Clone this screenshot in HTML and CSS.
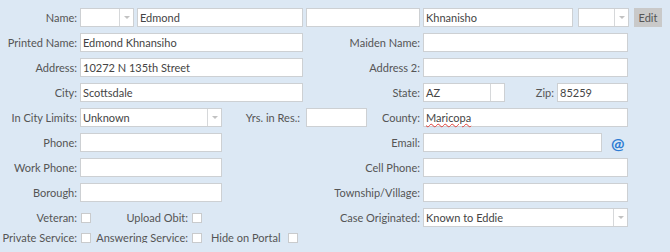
FILE: index.html
```html
<!DOCTYPE html>
<html lang="en">
<head>
  <meta charset="UTF-8">
  <meta name="viewport" content="width=device-width, initial-scale=1.0">
  <title>Decedent Info</title>
  <link rel="stylesheet" href="styles.css">
</head>
<body>
  <div class="form">
    <!-- Name -->
    <label class="lbl">Name:</label>
    <div class="cell">
      <div class="combo w-prefix"><span class="combo-text"></span><span class="combo-btn"></span></div>
      <input type="text" class="field w-first" value="Edmond">
    </div>
    <input type="text" class="field" value="">
    <div class="cell">
      <input type="text" class="field w-last" value="Khnanisho">
      <div class="combo w-suffix"><span class="combo-text"></span><span class="combo-btn"></span></div>
      <button class="btn-edit">Edit</button>
    </div>

    <!-- Printed name -->
    <label class="lbl">Printed Name:</label>
    <input type="text" class="field" value="Edmond Khnansiho">
    <label class="lbl">Maiden Name:</label>
    <input type="text" class="field w-right" value="">

    <!-- Address -->
    <label class="lbl">Address:</label>
    <input type="text" class="field" value="10272 N 135th Street">
    <label class="lbl">Address 2:</label>
    <input type="text" class="field w-right" value="">

    <!-- City / State / Zip -->
    <label class="lbl">City:</label>
    <input type="text" class="field" value="Scottsdale">
    <label class="lbl">State:</label>
    <div class="cell">
      <div class="combo w-state"><span class="combo-text">AZ</span><span class="combo-btn no-arrow"></span></div>
      <label class="lbl lbl-zip">Zip:</label>
      <input type="text" class="field w-zip" value="85259">
    </div>

    <!-- City limits / County -->
    <label class="lbl">In City Limits:</label>
    <div class="cell">
      <div class="combo w-short"><span class="combo-text">Unknown</span><span class="combo-btn"></span></div>
      <label class="lbl lbl-yrs">Yrs. in Res.:</label>
    </div>
    <div class="cell">
      <input type="text" class="field w-yrs" value="">
      <label class="lbl lbl-county">County:</label>
    </div>
    <div class="spell w-right">
      <input type="text" class="field" value="Maricopa" spellcheck="true">
      <span class="squiggle">Maricopa</span>
    </div>

    <!-- Phone / Email -->
    <label class="lbl">Phone:</label>
    <input type="text" class="field w-short" value="">
    <label class="lbl">Email:</label>
    <div class="cell">
      <input type="text" class="field w-email" value="">
      <span class="at-icon">@</span>
    </div>

    <!-- Work / Cell -->
    <label class="lbl">Work Phone:</label>
    <input type="text" class="field w-short" value="">
    <label class="lbl">Cell Phone:</label>
    <input type="text" class="field w-right" value="">

    <!-- Borough / Township -->
    <label class="lbl">Borough:</label>
    <input type="text" class="field w-short" value="">
    <label class="lbl">Township/Village:</label>
    <input type="text" class="field w-right" value="">

    <!-- Veteran / Case originated -->
    <label class="lbl">Veteran:</label>
    <div class="checks">
      <input type="checkbox" class="chk">
      <label class="lbl lbl-mid">Upload Obit:</label>
      <input type="checkbox" class="chk chk-mid">
    </div>
    <label class="lbl">Case Originated:</label>
    <div class="combo w-right"><span class="combo-text">Known to Eddie</span><span class="combo-btn"></span></div>

    <!-- Service flags -->
    <label class="lbl">Private Service:</label>
    <div class="checks">
      <input type="checkbox" class="chk">
      <label class="lbl lbl-mid">Answering Service:</label>
      <input type="checkbox" class="chk chk-mid">
      <label class="lbl lbl-portal">Hide on Portal</label>
      <input type="checkbox" class="chk chk-portal">
    </div>
  </div>
</body>
</html>
```

FILE: styles.css
```css
body {
  margin: 0;
  background-color: #dce8f4;
  font-family: Lato, "Open Sans", sans-serif;
  font-size: 11px;
  color: #555;
  overflow: hidden;
}

.form {
  display: grid;
  grid-template-columns: 77px 223px 114px 1fr;
  grid-template-rows: repeat(9, 19px) 10px;
  column-gap: 3px;
  row-gap: 6px;
  align-items: center;
  padding-top: 8px;
}

.lbl {
  text-align: right;
  white-space: nowrap;
  line-height: 12px;
}

.cell {
  display: flex;
  align-items: center;
}

/* Text inputs */
.field {
  box-sizing: border-box;
  width: 100%;
  height: 19px;
  margin: 0;
  padding: 0 2px;
  border: 1px solid #cdd0d3;
  background-color: #fff;
  font-family: inherit;
  font-size: 11px;
  color: #444;
  outline: none;
  flex: none;
}

.w-short { width: 142px; }
.w-right { width: 205px; }
.w-first { width: 166px; margin-left: 3px; }
.w-last { width: 150px; }
.w-email { width: 179px; }
.w-zip { width: 71px; }
.w-yrs { width: 61px; }

/* Spell-check squiggle drawn over the County value */
.spell {
  position: relative;
  height: 19px;
}

.squiggle {
  position: absolute;
  left: 3px;
  top: 1px;
  line-height: 17px;
  font-size: 11px;
  color: transparent;
  text-decoration: underline wavy #e0413a;
  text-decoration-thickness: 1px;
  text-underline-offset: 1px;
  pointer-events: none;
}

/* Drop-down look */
.combo {
  box-sizing: border-box;
  height: 19px;
  display: flex;
  flex: none;
  border: 1px solid #cdd0d3;
  background-color: #fff;
  color: #444;
}

.combo-text {
  flex: 1;
  padding: 0 2px;
  line-height: 17px;
  white-space: nowrap;
  overflow: hidden;
}

.combo-btn {
  width: 13px;
  border-left: 1px solid #d6d8da;
  display: flex;
  align-items: center;
  justify-content: center;
}

.combo-btn::after {
  content: "";
  border-left: 3px solid transparent;
  border-right: 3px solid transparent;
  border-top: 3px solid #c2c2c2;
}

.combo-btn.no-arrow::after {
  display: none;
}

.w-prefix { width: 54px; }
.w-suffix { width: 51px; margin-left: 5px; }
.w-state { width: 82px; }

.lbl-zip {
  width: 49px;
  margin-right: 3px;
}

.lbl-yrs {
  margin-left: auto;
  margin-right: 3px;
}

.lbl-county {
  margin-left: auto;
}

.btn-edit {
  flex: none;
  width: 28px;
  height: 19px;
  margin-left: 5px;
  padding: 0;
  border: none;
  background-color: #c9c9c9;
  font-family: inherit;
  font-size: 11px;
  color: #555;
}

.at-icon {
  margin-left: 9px;
  font-size: 16px;
  font-weight: bold;
  color: #2e7cd3;
  line-height: 16px;
}

/* Checkbox rows */
.checks {
  display: flex;
  align-items: center;
}

.chk {
  appearance: none;
  box-sizing: border-box;
  flex: none;
  width: 10px;
  height: 10px;
  margin: 0 0 0 1px;
  border: 1px solid #c9cbcd;
  background-color: #fff;
}

.lbl-mid {
  flex: none;
  width: 97px;
}

.chk-mid {
  margin-left: 4px;
}

.lbl-portal {
  margin-left: 9px;
}

.chk-portal {
  margin-left: 7px;
}
```
